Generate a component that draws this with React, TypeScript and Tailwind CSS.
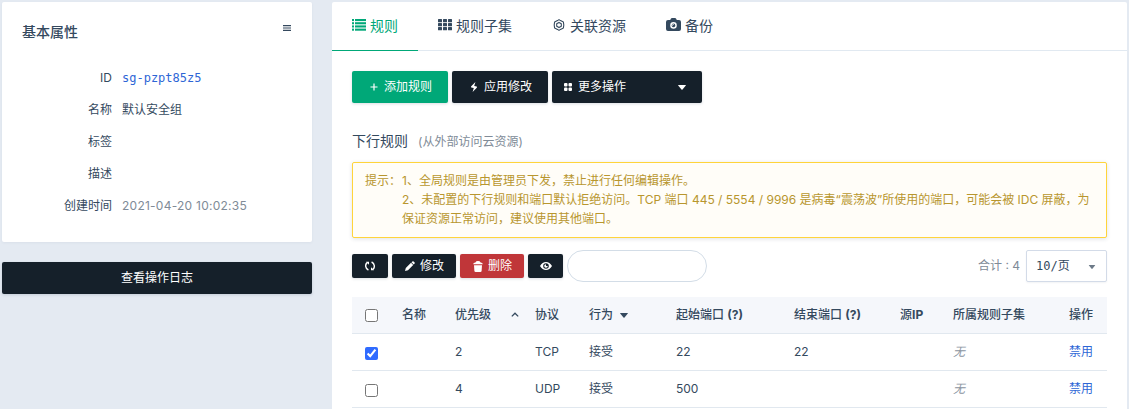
import type { ReactNode } from 'react';

const darkButton =
  'flex shrink-0 items-center rounded-[2px] bg-[#15202a] text-white shadow-[0_1px_3px_rgba(30,50,80,0.16)]';

function ListIcon() {
  return (
    <svg className="mb-[2px]" width="14" height="12" viewBox="0 0 14 12" fill="currentColor">
      {[0, 3.2, 6.4, 9.6].map((y) => (
        <g key={y}>
          <rect x="0" y={y} width="2" height="2.1" />
          <rect x="3" y={y} width="11" height="2.1" />
        </g>
      ))}
    </svg>
  );
}

function GridIcon() {
  return (
    <svg className="mb-[2px]" width="14" height="12" viewBox="0 0 14 12" fill="currentColor">
      {[0, 4, 8].map((y) =>
        [0, 5, 10].map((x) => <rect key={`${x}-${y}`} x={x} y={y} width="4" height="3.2" rx="0.5" />),
      )}
    </svg>
  );
}

function NutIcon() {
  return (
    <svg className="mb-[2px]" width="12" height="12" viewBox="0 0 12 12" fill="none" stroke="currentColor">
      <path d="M6 .6 7.5 1.6 10.4 3 10.8 6 10.4 9 7.5 10.4 6 11.4 4.5 10.4 1.6 9 1.2 6 1.6 3 4.5 1.6Z" strokeWidth="1.1" strokeLinejoin="round" />
      <path d="M6 3.4 8.3 4.7V7.3L6 8.6 3.7 7.3V4.7Z" strokeWidth="1.1" strokeLinejoin="round" />
    </svg>
  );
}

function CameraIcon() {
  return (
    <svg className="mb-[3px]" width="15" height="13" viewBox="0 0 15 13" fill="currentColor" fillRule="evenodd">
      <path d="M2 2H4.2L5 .6Q5.2 0 6 0H9Q9.8 0 10 .6L10.8 2H13Q15 2 15 4V11Q15 13 13 13H2Q0 13 0 11V4Q0 2 2 2ZM7.5 4.1A3.3 3.3 0 1 0 7.5 10.7A3.3 3.3 0 1 0 7.5 4.1Z" />
      <circle cx="7.5" cy="7.4" r="1.8" />
      <path d="M6.4 7.6Q6.4 6.3 7.7 6.3" fill="none" stroke="white" strokeWidth="1" />
    </svg>
  );
}

function Caret({ className }: { className: string }) {
  return (
    <svg className={className} width="8" height="5" viewBox="0 0 8 5" fill="currentColor">
      <path d="M.5 0H7.5Q8.2 0 7.8 .6L4.5 4.6Q4 5.1 3.5 4.6L.2 .6Q-.2 0 .5 0Z" />
    </svg>
  );
}

function Property({ label, children }: { label: string; children?: ReactNode }) {
  return (
    <div className="flex h-8 items-center">
      <div className="w-[90px] shrink-0 text-right">{label}</div>
      <div className="pl-[10px]">{children}</div>
    </div>
  );
}

function Tab({ icon, label, className }: { icon: ReactNode; label: string; className: string }) {
  return (
    <div className={`flex h-[49px] shrink-0 items-center border-b text-sm ${className}`}>
      {icon}
      <span>{label}</span>
    </div>
  );
}

const rules = [
  { checked: true, priority: '2', protocol: 'TCP', start: '22', end: '22' },
  { checked: false, priority: '4', protocol: 'UDP', start: '500', end: '' },
];

function RuleRow({ rule }: { rule: (typeof rules)[number] }) {
  return (
    <tr className="h-[37px] border-b border-[#e1e8ef] [&>td]:p-0 [&>td]:pl-3">
      <td>
        <input
          type="checkbox"
          defaultChecked={rule.checked}
          className="relative top-[2px] ml-[1px] block size-[13px] accent-[#2f6bff]"
        />
      </td>
      <td />
      <td>{rule.priority}</td>
      <td>{rule.protocol}</td>
      <td>接受</td>
      <td>{rule.start}</td>
      <td>{rule.end}</td>
      <td />
      <td className="text-[#8a949f] italic">无</td>
      <td className="text-[#2d66d6]">禁用</td>
    </tr>
  );
}

export default function App() {
  return (
    <div className="flex h-[409px] w-[1129px] overflow-hidden bg-[#e4eaf2] pt-[2px] pl-[2px] font-['Inter','Noto_Sans_CJK_SC',sans-serif] text-xs text-[#34495e]">
      <aside className="w-[310px] shrink-0">
        <section className="h-[240px] rounded-[2px] bg-white px-5 shadow-[0_1px_3px_rgba(30,50,80,0.05)]">
          <div className="flex h-[60px] items-center justify-between">
            <h2 className="text-sm font-medium">基本属性</h2>
            <svg className="mr-[1px] mb-[8px]" width="8" height="6" viewBox="0 0 8 6" fill="currentColor">
              <path d="M0 0H8V1.2H0ZM0 2.4H8V3.6H0ZM0 4.8H8V6H0Z" />
            </svg>
          </div>
          <Property label="ID">
            <span className="font-['DejaVu_Sans_Mono',monospace] text-[#2d66d6]">sg-pzpt85z5</span>
          </Property>
          <Property label="名称">默认安全组</Property>
          <Property label="标签" />
          <Property label="描述" />
          <Property label="创建时间">
            <span className="tracking-[0.25px] text-[#808b97]">2021-04-20 10:02:35</span>
          </Property>
        </section>
        <button className={`${darkButton} mt-5 h-8 w-full justify-center`}>查看操作日志</button>
      </aside>

      <main className="ml-5 h-[420px] w-[795px] shrink-0 rounded-[2px] bg-white">
        <nav className="flex h-[49px] border-b border-[#e1e9f1]">
          <Tab
            icon={<ListIcon />}
            label="规则"
            className="w-[86px] gap-1 border-[#00a878] pl-5 text-[#00a878]"
          />
          <Tab icon={<GridIcon />} label="规则子集" className="w-[115px] gap-1 border-transparent pl-5" />
          <Tab icon={<NutIcon />} label="关联资源" className="w-[113px] gap-[5px] border-transparent pl-5" />
          <Tab icon={<CameraIcon />} label="备份" className="gap-1 border-transparent pl-5" />
        </nav>

        <div className="px-5 pt-5">
          <div className="flex h-8 gap-1">
            <button className="flex w-24 items-center rounded-[2px] bg-[#00a878] pl-[18px] text-white shadow-[0_1px_3px_rgba(30,50,80,0.16)]">
              <svg width="8" height="8" viewBox="0 0 8 8" fill="currentColor">
                <path d="M3.4 .5H4.6V3.4H7.5V4.6H4.6V7.5H3.4V4.6H.5V3.4H3.4Z" />
              </svg>
              <span className="ml-[6px]">添加规则</span>
            </button>
            <button className={`${darkButton} w-24 pl-[19px]`}>
              <svg width="6" height="10" viewBox="0 0 6 10" fill="currentColor">
                <path d="M4.4 0 0 4.5 .2 5.5 2.8 6.1 1.6 10 6 5.5 5.8 4.5 3.2 3.9Z" />
              </svg>
              <span className="ml-[7px]">应用修改</span>
            </button>
            <button className={`${darkButton} w-[150px] pl-3`}>
              <svg width="8" height="8" viewBox="0 0 8 8" fill="currentColor">
                <rect width="3.5" height="3.5" rx="1" />
                <rect x="4.5" width="3.5" height="3.5" rx="1" />
                <rect y="4.5" width="3.5" height="3.5" rx="1" />
                <rect x="4.5" y="4.5" width="3.5" height="3.5" rx="1" />
              </svg>
              <span className="ml-[6px]">更多操作</span>
              <Caret className="mr-4 ml-auto" />
            </button>
          </div>

          <div className="mt-7 flex h-5 items-center">
            <h3 className="text-sm">下行规则</h3>
            <span className="mt-[2px] ml-[10px] text-[#808b97]">(从外部访问云资源)</span>
          </div>

          <div className="mt-[11px] flex h-[76px] rounded-[2px] border border-[#ffd43b] bg-[#fffdf8] px-3 pt-[8px] leading-[19px] text-[#b8962e] shadow-[0_1px_4px_rgba(30,50,80,0.14)]">
            <div className="w-[37px] shrink-0 whitespace-nowrap">提示：</div>
            <div className="whitespace-nowrap">
              <p>1、全局规则是由管理员下发，禁止进行任何编辑操作。</p>
              <p>
                2、未配置的下行规则和端口默认拒绝访问。TCP 端口 445 / 5554 / 9996 是病毒“震荡波”所使用的端口，可能会被 IDC 屏蔽，为
                <br />
                保证资源正常访问，建议使用其他端口。
              </p>
            </div>
          </div>

          <div className="mt-3 flex h-8 items-center gap-1">
            <button className={`${darkButton} h-6 w-9 justify-center`}>
              <svg width="10" height="10" viewBox="0 0 10 10" fill="none" stroke="currentColor" strokeWidth="1.4">
                <path d="M3.4 9C.1 7.4 -.1 3.4 2.2 1.6M6.6 1C9.9 2.6 10.1 6.6 7.8 8.4" />
                <path d="M1 .7H4V3.7ZM9 9.3H6V6.3Z" fill="currentColor" stroke="none" />
              </svg>
            </button>
            <button className={`${darkButton} h-6 w-16 pl-[13px]`}>
              <svg width="10" height="10" viewBox="0 0 10 10" fill="currentColor">
                <path d="M0 10 .8 7 6 1.8 8.2 4 3 9.2ZM6.5 1.3 7.4 .4Q8 -.1 8.6 .4L9.6 1.4Q10.1 2 9.6 2.6L8.7 3.5Z" />
              </svg>
              <span className="ml-[5px]">修改</span>
            </button>
            <button className="flex h-6 w-16 items-center rounded-[2px] bg-[#c03639] pl-[13px] text-white shadow-[0_1px_3px_rgba(30,50,80,0.16)]">
              <svg width="10" height="11" viewBox="0 0 10 11" fill="currentColor">
                <path d="M.2 3.2Q.2 1.5 2.4 1.4Q3 0 5 0T7.6 1.4Q9.8 1.5 9.8 3.2ZM1 4.2H9L8.6 10Q8.5 11 7.3 11H2.7Q1.5 11 1.4 10Z" />
              </svg>
              <span className="ml-[5px]">删除</span>
            </button>
            <button className={`${darkButton} h-6 w-[35px] justify-center`}>
              <svg width="12" height="8" viewBox="0 0 12 8" fill="currentColor" fillRule="evenodd">
                <path d="M0 4Q2.4 0 6 0T12 4Q9.6 8 6 8T0 4ZM6 1.2A2.8 2.8 0 1 0 6 6.8A2.8 2.8 0 1 0 6 1.2Z" />
                <path d="M6 2.2A1.8 1.8 0 1 0 7.8 4L6 4Z" />
              </svg>
            </button>
            <input
              type="text"
              aria-label="搜索"
              className="h-8 w-[140px] rounded-full border border-[#d3dde7] bg-white px-3 outline-none"
            />
            <span className="ml-auto text-[#808b97]">合计 : 4</span>
            <button className="ml-[2px] flex h-8 w-[81px] items-center rounded-[2px] border border-[#d3dbe8] bg-white pl-[9px] font-['DejaVu_Sans_Mono','Noto_Sans_CJK_SC',monospace] shadow-[0_1px_2px_rgba(30,50,80,0.06)]">
              <span>10/页</span>
              <Caret className="mt-[2px] mr-[10px] ml-auto h-[4px] text-[#6d7a88]" />
            </button>
          </div>

          <table className="mt-[15px] w-[755px] table-fixed border-collapse">
            <colgroup>
              <col className="w-[38px]" />
              <col className="w-[53px]" />
              <col className="w-[80px]" />
              <col className="w-[54px]" />
              <col className="w-[87px]" />
              <col className="w-[118px]" />
              <col className="w-[106px]" />
              <col className="w-[53px]" />
              <col className="w-[116px]" />
              <col className="w-[50px]" />
            </colgroup>
            <thead>
              <tr className="h-9 border-b border-[#e1e8ef] bg-[#f5f7fb] text-left whitespace-nowrap [&>th]:p-0 [&>th]:pl-3 [&>th]:font-medium">
                <th>
                  <input type="checkbox" className="relative top-[1px] ml-[1px] block size-[13px]" />
                </th>
                <th>名称</th>
                <th>
                  <div className="flex items-center justify-between pr-1">
                    <span>优先级</span>
                    <svg width="8" height="5" viewBox="0 0 8 5" fill="none" stroke="currentColor" strokeWidth="1.3">
                      <path d="M.8 4.4 4 1.2 7.2 4.4" />
                    </svg>
                  </div>
                </th>
                <th>协议</th>
                <th>
                  <div className="flex items-center">
                    <span>行为</span>
                    <Caret className="mt-[1px] ml-[7px]" />
                  </div>
                </th>
                <th>
                  起始端口 <b className="font-bold">(?)</b>
                </th>
                <th>
                  结束端口 <b className="font-bold">(?)</b>
                </th>
                <th>
                  源<b className="font-bold">IP</b>
                </th>
                <th>所属规则子集</th>
                <th>操作</th>
              </tr>
            </thead>
            <tbody>
              {rules.map((rule) => (
                <RuleRow key={rule.priority} rule={rule} />
              ))}
            </tbody>
          </table>
        </div>
      </main>
    </div>
  );
}
